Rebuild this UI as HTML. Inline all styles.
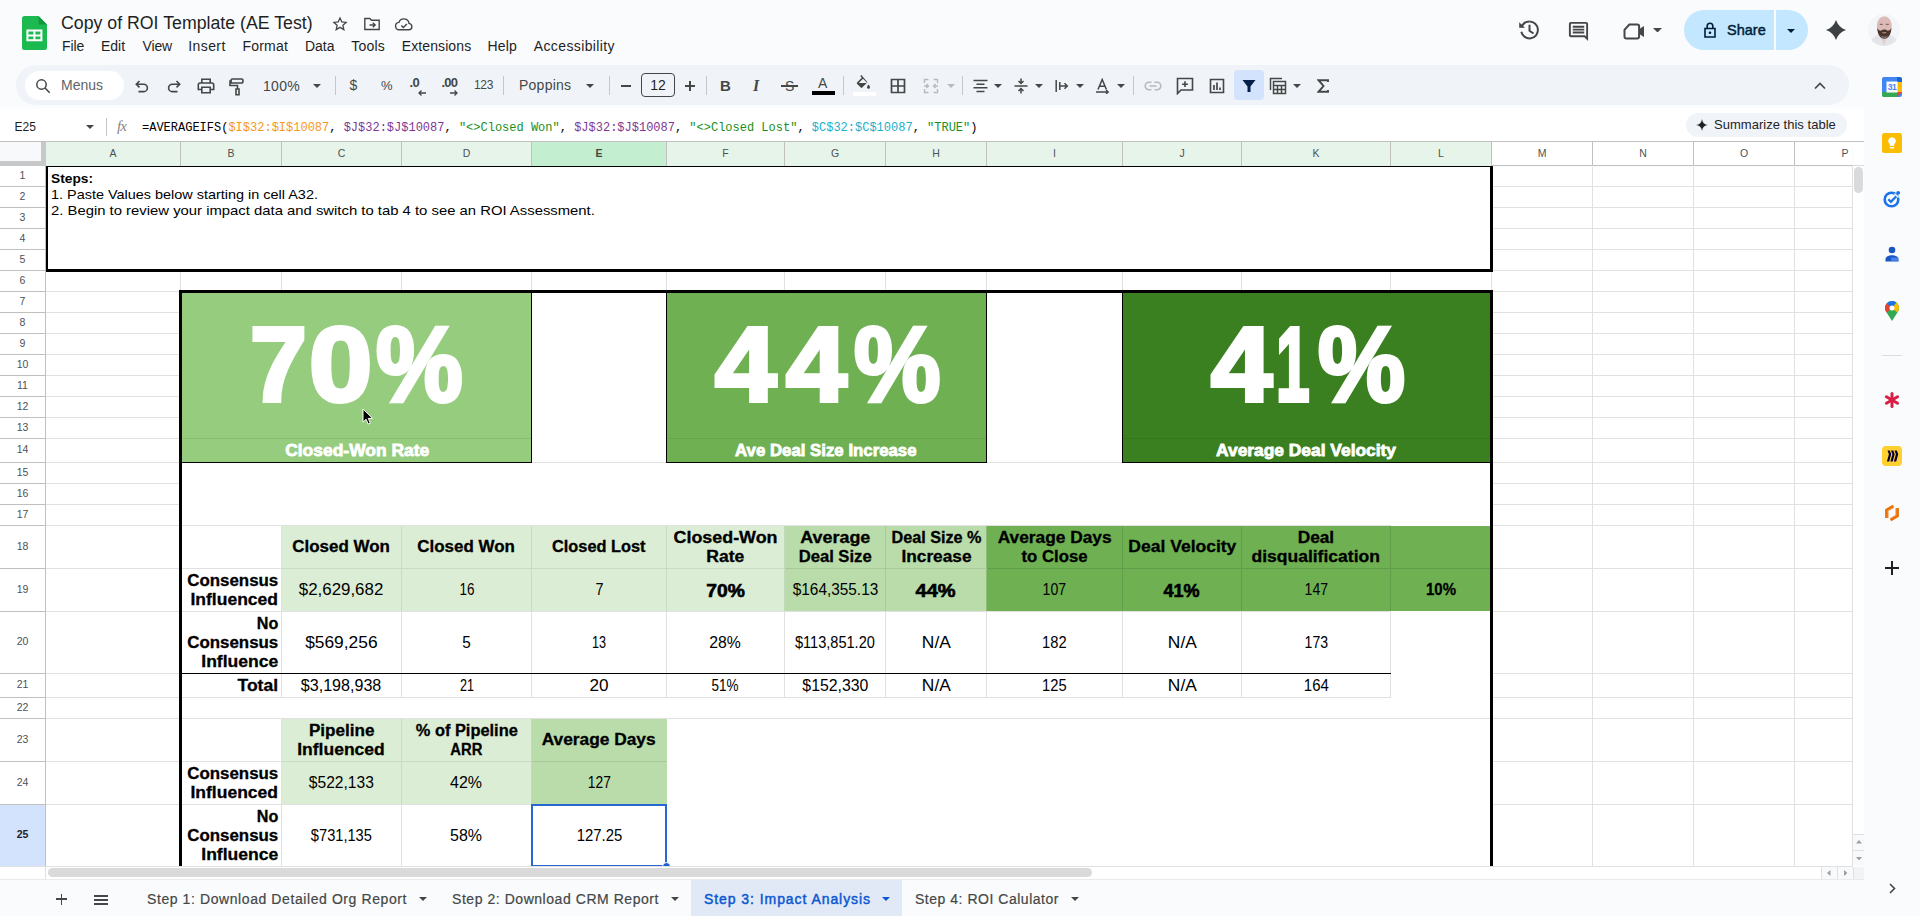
<!DOCTYPE html><html lang="en"><head><meta charset="utf-8"><title>Copy of ROI Template (AE Test) - Google Sheets</title><style>*{box-sizing:border-box;margin:0;padding:0}
html,body{width:1920px;height:916px;overflow:hidden;background:#f9fbfd;font-family:"Liberation Sans",sans-serif;color:#1f1f1f}
.abs{position:absolute}
#grid{position:absolute;left:0;top:0;width:1920px;height:916px}
.hln{position:absolute;left:46px;width:1806px;height:1px;background:#e1e1e1}
.vln{position:absolute;top:167px;width:1px;height:699px;background:#e1e1e1}
.ch{position:absolute;top:142px;height:24px;background:#fff;font-size:10.5px;color:#4d5156;text-align:center;line-height:23px}
.ch.chs{background:#e6f4ea}
.ch.cha{background:#c4eed0;font-weight:bold;color:#3c4a3e}
.rh{position:absolute;left:0;width:45px;background:#fff;font-size:10.5px;color:#4d5156;text-align:center}
.rh.rha{background:#d3e3fd;font-weight:bold;color:#1f1f1f}
.bg{position:absolute}
.c{position:absolute;display:flex;align-items:center;justify-content:center;text-align:center;font-size:16px;line-height:19px;color:#000;white-space:nowrap}
.c span{display:inline-block;transform:scaleX(1.1);transform-origin:center}
.c.b{font-weight:bold;-webkit-text-stroke:0.3px #000}
.c.r{justify-content:flex-end;text-align:right;padding-right:2.5px}
.c.r span{transform-origin:right center}
.blk{position:absolute;background:#000}
.mn{position:absolute;top:38px;font-size:14px;line-height:16px;color:#1f1f1f;white-space:nowrap}
.tb{position:absolute}
.sep{position:absolute;top:76px;width:1px;height:20px;background:#c7c7c7}
.tab{position:absolute;top:881px;height:36px;font-size:14px;line-height:36px;color:#444746;white-space:nowrap}
</style></head><body>
<div id="top">
<div class="abs" style="left:0;top:0;width:1920px;height:142px;background:#f9fbfd"></div>
<svg class="abs" style="left:21.500px;top:16px" width="25" height="34" viewBox="0 0 25 34"><path d="M2.500 0H16.500l8.500 8.500V31.500a2.500 2.500 0 0 1-2.500 2.500h-20A2.500 2.500 0 0 1 0 31.500V2.500A2.500 2.500 0 0 1 2.500 0z" fill="#1cb950"/><path d="M16.500 0l8.500 8.500h-8.500z" fill="#12983e"/><path d="M4.400 13.600h16v11.700h-16zM6.400 15.600v2.800h5v-2.800zM13.400 15.600v2.800h5v-2.800zM6.400 20.400v2.900h5v-2.900zM13.400 20.400v2.900h5v-2.900z" fill="#fff" fill-rule="evenodd"/></svg>
<div class="abs" id="title" style="left:61px;top:11px;font-size:18px;line-height:24px;color:#1f1f1f;white-space:nowrap;transform:scaleX(0.985);transform-origin:left center">Copy of ROI Template (AE Test)</div>
<svg class="abs" style="left:331px;top:14.5px" width="18" height="18" viewBox="0 0 18 18"><path d="M9 2.200l2.060 4.500 4.900.500-3.680 3.280 1.050 4.820L9 12.800l-4.330 2.500 1.050-4.820L2.040 7.200l4.900-.500z" fill="none" stroke="#444746" stroke-width="1.5" transform="translate(1.100,1.100) scale(0.880)"/></svg>
<svg class="abs" style="left:363px;top:15.5px" width="18" height="16" viewBox="0 0 18 16"><path d="M1.800 2.500h5l1.700 1.800h7.700v9.200H1.800z" fill="none" stroke="#444746" stroke-width="1.4" /><path d="M6.500 9h5.500M9.800 6.700L12.200 9l-2.400 2.300" fill="none" stroke="#444746" stroke-width="1.4" /></svg>
<svg class="abs" style="left:394px;top:16.5px" width="20" height="14" viewBox="0 0 20 14"><path d="M5.200 12.800a3.700 3.700 0 0 1-.300-7.380A5.200 5.200 0 0 1 15 6.400a3.250 3.250 0 0 1 .300 6.400z" fill="none" stroke="#444746" stroke-width="1.4" /><path d="M7.300 8.600l2 2 3.600-3.600" fill="none" stroke="#444746" stroke-width="1.4" /></svg>
<div class="mn" style="left:62px;letter-spacing:-0.077px">File</div>
<div class="mn" style="left:101px;letter-spacing:-0.031px">Edit</div>
<div class="mn" style="left:142.5px;letter-spacing:-0.148px">View</div>
<div class="mn" style="left:188.25px;letter-spacing:0.415px">Insert</div>
<div class="mn" style="left:242.5px;letter-spacing:0.194px">Format</div>
<div class="mn" style="left:305px;letter-spacing:-0.018px">Data</div>
<div class="mn" style="left:351.25px;letter-spacing:0.213px">Tools</div>
<div class="mn" style="left:401.75px;letter-spacing:0.102px">Extensions</div>
<div class="mn" style="left:487.5px;letter-spacing:0.177px">Help</div>
<div class="mn" style="left:533.75px;letter-spacing:0.385px">Accessibility</div>
<div class="abs" style="left:16px;top:65px;width:1833px;height:40px;border-radius:20px;background:#f0f4f9"></div>
<div class="abs" style="left:25px;top:71px;width:99px;height:29px;border-radius:15px;background:#fff"></div>
<svg class="abs" style="left:34.5px;top:77.5px" width="16" height="16" viewBox="0 0 16 16"><circle cx="6.500" cy="6.500" r="4.700" fill="none" stroke="#444746" stroke-width="1.500"/><path d="M10 10l4.700 4.700" fill="none" stroke="#444746" stroke-width="1.6" /></svg>
<div class="abs" style="left:61px;top:77px;font-size:14px;line-height:17px;color:#5f6368;white-space:nowrap;">Menus</div>
<svg class="abs" style="left:135px;top:80px" width="14" height="13" viewBox="0 0 14 13"><path d="M4.500 1L1.300 4.200l3.200 3.200M1.500 4.200h7.200a3.700 3.700 0 0 1 0 7.400H3.500" fill="none" stroke="#444746" stroke-width="1.6" /></svg>
<svg class="abs" style="left:167px;top:80px" width="14" height="13" viewBox="0 0 14 13"><path d="M9.500 1l3.200 3.200-3.200 3.200M12.500 4.200H5.300a3.700 3.700 0 0 0 0 7.400h5.200" fill="none" stroke="#444746" stroke-width="1.6" /></svg>
<svg class="abs" style="left:197px;top:78px" width="18" height="16" viewBox="0 0 18 16"><path d="M4.800 5V1.300h8.400V5M4.800 11.500H1.300V6.800a1.800 1.800 0 0 1 1.800-1.800h11.800a1.800 1.800 0 0 1 1.800 1.800v4.700h-3.500M4.800 9.200h8.400v5.500H4.800z" fill="none" stroke="#444746" stroke-width="1.6" /></svg>
<svg class="abs" style="left:229px;top:77.5px" width="16" height="18" viewBox="0 0 16 18"><path d="M3.300 1h9.400a1.200 1.200 0 0 1 1.200 1.200v1.600a1.200 1.200 0 0 1-1.200 1.200H3.300a1.200 1.200 0 0 1-1.200-1.200V2.200A1.200 1.200 0 0 1 3.300 1zM2 3H1v4.500h7.500v3.500M7 11h3v5.800H7z" fill="none" stroke="#444746" stroke-width="1.6" /></svg>
<div class="abs" style="left:263px;top:77px;font-size:14px;line-height:18px;color:#444746;white-space:nowrap;letter-spacing:0.300px">100%</div>
<svg class="abs" style="left:313px;top:84px" width="8" height="4" viewBox="0 0 8 4"><path d="M0 0h8l-4 4z" fill="#444746"/></svg>
<div class="abs" style="left:335px;top:76px;width:1px;height:19px;background:#c7c7c7"></div>
<div class="abs" style="left:349.5px;top:77px;font-size:14px;line-height:17px;color:#444746;white-space:nowrap;">$</div>
<div class="abs" style="left:381px;top:77px;font-size:13px;line-height:17px;color:#444746;white-space:nowrap;">%</div>
<div class="abs" style="left:409.5px;top:75px;font-size:13px;line-height:16px;color:#444746;white-space:nowrap;font-weight:bold;letter-spacing:-0.500px">.0</div>
<svg class="abs" style="left:418px;top:90px" width="8" height="6" viewBox="0 0 8 6"><path d="M8 3H1M3.500 0.500L1 3l2.500 2.500" fill="none" stroke="#444746" stroke-width="1.3" /></svg>
<div class="abs" style="left:441.5px;top:75px;font-size:13px;line-height:16px;color:#444746;white-space:nowrap;font-weight:bold;letter-spacing:-0.800px">.00</div>
<svg class="abs" style="left:450px;top:90px" width="8" height="6" viewBox="0 0 8 6"><path d="M0 3h7M4.500 0.500L7 3 4.500 5.500" fill="none" stroke="#444746" stroke-width="1.3" /></svg>
<div class="abs" style="left:474px;top:78px;font-size:12px;line-height:15px;color:#444746;white-space:nowrap;letter-spacing:-0.300px">123</div>
<div class="abs" style="left:503px;top:76px;width:1px;height:19px;background:#c7c7c7"></div>
<div class="abs" style="left:519px;top:76px;font-size:14px;line-height:18px;color:#444746;white-space:nowrap;letter-spacing:0.250px">Poppins</div>
<svg class="abs" style="left:586px;top:84px" width="8" height="4" viewBox="0 0 8 4"><path d="M0 0h8l-4 4z" fill="#444746"/></svg>
<div class="abs" style="left:609px;top:76px;width:1px;height:19px;background:#c7c7c7"></div>
<div class="abs" style="left:621px;top:85px;width:10px;height:1.600px;background:#444746"></div>
<div class="abs" style="left:641px;top:73px;width:34px;height:24px;border:1px solid #444746;border-radius:4px;font-size:14px;line-height:23px;text-align:center;color:#1f1f1f">12</div>
<div class="abs" style="left:685px;top:85px;width:10px;height:1.600px;background:#444746"></div><div class="abs" style="left:689.200px;top:81px;width:1.600px;height:10px;background:#444746"></div>
<div class="abs" style="left:706px;top:76px;width:1px;height:19px;background:#c7c7c7"></div>
<div class="abs" style="left:720px;top:77px;font-size:15px;line-height:18px;color:#444746;white-space:nowrap;font-weight:bold">B</div>
<div class="abs" style="left:753px;top:77px;font-size:15px;line-height:18px;color:#444746;white-space:nowrap;font-style:italic;font-weight:bold;font-family:'Liberation Serif',serif;font-size:16px">I</div>
<div class="abs" style="left:785px;top:77px;font-size:14px;line-height:18px;color:#444746;white-space:nowrap;">S</div>
<div class="abs" style="left:781px;top:85px;width:17px;height:1.500px;background:#444746"></div>
<div class="abs" style="left:818px;top:74px;font-size:14px;line-height:18px;color:#444746;white-space:nowrap;">A</div>
<div class="abs" style="left:812px;top:91px;width:23px;height:4px;background:#000"></div>
<div class="abs" style="left:843px;top:76px;width:1px;height:19px;background:#c7c7c7"></div>
<svg class="abs" style="left:854px;top:74px" width="18" height="16" viewBox="0 0 18 16"><path d="M8.200 1L6.900 2.300l1.800 1.800L3.500 9.300a1.200 1.200 0 0 0 0 1.700l4 4a1.200 1.200 0 0 0 1.700 0l5.800-5.800zM5.300 10.100l4.700-4.700 4.700 4.700z" fill="#444746" transform="scale(0.900)"/><path d="M14.500 10.500s-1.500 1.700-1.500 2.700a1.500 1.500 0 0 0 3 0c0-1-1.500-2.700-1.500-2.700z" fill="#444746"/></svg>
<div class="abs" style="left:853px;top:92px;width:23px;height:4px;background:#fff"></div>
<svg class="abs" style="left:890px;top:78px" width="16" height="16" viewBox="0 0 16 16"><path d="M1.500 1.500h13v13h-13zM8 1.500v13M1.500 8h13" fill="none" stroke="#444746" stroke-width="1.7" /></svg>
<svg class="abs" style="left:923px;top:78px" width="16" height="16" viewBox="0 0 16 16"><path d="M1.500 5V1.500h4M10.500 1.500h4V5M14.500 11v3.500h-4M5.500 14.500h-4V11M1 8h4.500M3.500 6l2 2-2 2M15 8h-4.500M12.500 6l-2 2 2 2" fill="none" stroke="#b7babd" stroke-width="1.4" /></svg>
<svg class="abs" style="left:947px;top:84px" width="8" height="4" viewBox="0 0 8 4"><path d="M0 0h8l-4 4z" fill="#b7babd"/></svg>
<div class="abs" style="left:962px;top:76px;width:1px;height:19px;background:#c7c7c7"></div>
<svg class="abs" style="left:972.5px;top:79px" width="15" height="14" viewBox="0 0 15 14"><path d="M0.500 1.500h14M3.500 5.200h8M0.500 8.800h14M3.500 12.500h8" fill="none" stroke="#444746" stroke-width="1.6" /></svg>
<svg class="abs" style="left:994px;top:84px" width="8" height="4" viewBox="0 0 8 4"><path d="M0 0h8l-4 4z" fill="#444746"/></svg>
<svg class="abs" style="left:1014px;top:78px" width="14" height="16" viewBox="0 0 14 16"><path d="M0.500 8h13M7 0.500v4.500M4.500 3L7 5.500 9.500 3M7 15.500V11M4.500 13L7 10.500 9.500 13" fill="none" stroke="#444746" stroke-width="1.5" /></svg>
<svg class="abs" style="left:1035px;top:84px" width="8" height="4" viewBox="0 0 8 4"><path d="M0 0h8l-4 4z" fill="#444746"/></svg>
<svg class="abs" style="left:1055px;top:79px" width="14" height="14" viewBox="0 0 14 14"><path d="M1.200 1v12M4.500 7h7.500M9.500 4.300L12.300 7 9.500 9.700M4.800 3v8" fill="none" stroke="#444746" stroke-width="1.5" /></svg>
<svg class="abs" style="left:1076px;top:84px" width="8" height="4" viewBox="0 0 8 4"><path d="M0 0h8l-4 4z" fill="#444746"/></svg>
<svg class="abs" style="left:1095px;top:78px" width="16" height="16" viewBox="0 0 16 16"><path d="M3 11.500L7.200 1.500 11.400 11.500M4.500 8.200h5.400" fill="none" stroke="#444746" stroke-width="1.5" /><path d="M1 14h12M11 12l2.300 2-2.300 2" fill="none" stroke="#444746" stroke-width="1.3" /></svg>
<svg class="abs" style="left:1117px;top:84px" width="8" height="4" viewBox="0 0 8 4"><path d="M0 0h8l-4 4z" fill="#444746"/></svg>
<div class="abs" style="left:1133px;top:76px;width:1px;height:19px;background:#c7c7c7"></div>
<svg class="abs" style="left:1144px;top:81px" width="18" height="10" viewBox="0 0 18 10"><path d="M7.500 1.200H5a3.800 3.800 0 0 0 0 7.600h2.500M10.500 1.200H13a3.800 3.800 0 0 1 0 7.600h-2.500M5.500 5h7" fill="none" stroke="#b7babd" stroke-width="1.6" /></svg>
<svg class="abs" style="left:1176px;top:77px" width="18" height="18" viewBox="0 0 18 18"><path d="M1.500 1.500h15v11.500H5l-3.500 3.500zM9 4.300v5.800M6.100 7.200h5.800" fill="none" stroke="#444746" stroke-width="1.6" /></svg>
<svg class="abs" style="left:1209px;top:78px" width="16" height="16" viewBox="0 0 16 16"><path d="M1.500 1.500h13v13h-13z" fill="none" stroke="#444746" stroke-width="1.6" /><path d="M5 12V7M8 12V4.500M11 12v-2.500" fill="none" stroke="#444746" stroke-width="1.7" /></svg>
<div class="abs" style="left:1234px;top:70px;width:30px;height:30px;border-radius:4px;background:#d3e3fd"></div>
<svg class="abs" style="left:1242px;top:79px" width="14" height="14" viewBox="0 0 14 14"><path d="M0.500 1h13L8.500 7.500V13h-3V7.500z" fill="#041e49" /></svg>
<svg class="abs" style="left:1269px;top:77px" width="18" height="18" viewBox="0 0 18 18"><path d="M4.500 4.500h12v12h-12zM4.500 8.500h12M4.500 12.500h12M8.500 8.500v8M12.500 8.500v8" fill="none" stroke="#444746" stroke-width="1.5" /><path d="M1.500 13V1.500H13" fill="none" stroke="#444746" stroke-width="1.5" /></svg>
<svg class="abs" style="left:1293px;top:84px" width="8" height="4" viewBox="0 0 8 4"><path d="M0 0h8l-4 4z" fill="#444746"/></svg>
<svg class="abs" style="left:1317px;top:79px" width="12" height="14" viewBox="0 0 12 14"><path d="M11 3V1.200H1.500L6.500 7l-5 5.800H11V11" fill="none" stroke="#444746" stroke-width="1.9" /></svg>
<svg class="abs" style="left:1814px;top:82px" width="12" height="8" viewBox="0 0 12 8"><path d="M1 6.500l5-5 5 5" fill="none" stroke="#444746" stroke-width="1.7" /></svg>
<div class="abs" style="left:0;top:111px;width:1864px;height:30px;background:#fff"></div>
<div class="abs" style="left:0;top:105px;width:1864px;height:6px;background:linear-gradient(#f9fbfd,#fff)"></div>
<div class="abs" style="left:14.5px;top:119px;font-size:12px;line-height:16px;color:#1f1f1f;white-space:nowrap;">E25</div>
<svg class="abs" style="left:85.5px;top:125px" width="8" height="4" viewBox="0 0 8 4"><path d="M0 0h8l-4 4z" fill="#444746"/></svg>
<div class="abs" style="left:106px;top:118px;width:1px;height:18px;background:#c7c7c7"></div>
<div class="abs" style="left:117px;top:117px;font-family:'Liberation Serif',serif;font-style:italic;font-size:15px;line-height:18px;color:#80868b;letter-spacing:-1px">fx</div>
<div class="abs" id="fx" style="left:142px;top:120px;font-family:'Liberation Mono',monospace;font-size:12px;line-height:16px;color:#000;white-space:pre">=AVERAGEIFS(<span style="color:#f7981d">$I$32:$I$10087</span>, <span style="color:#7e3794">$J$32:$J$10087</span>, <span style="color:#1a8f1a">"&lt;&gt;Closed Won"</span>, <span style="color:#7e3794">$J$32:$J$10087</span>, <span style="color:#1a8f1a">"&lt;&gt;Closed Lost"</span>, <span style="color:#22b0c9">$C$32:$C$10087</span>, <span style="color:#1a8f1a">"TRUE"</span>)</div>
<div class="abs" style="left:1686px;top:113px;width:161px;height:24px;border-radius:12px;background:#f0f4f9"></div>
<svg class="abs" style="left:1696px;top:119px" width="12" height="12" viewBox="0 0 12 12"><path d="M6 0C6.400 3.600 8.400 5.600 12 6 8.400 6.400 6.400 8.400 6 12 5.600 8.400 3.600 6.400 0 6 3.600 5.600 5.600 3.600 6 0z" fill="#1f1f1f" /></svg>
<div class="abs" style="left:1714px;top:117px;font-size:13px;line-height:16px;color:#1f1f1f;white-space:nowrap;letter-spacing:0.021px">Summarize this table</div>
<svg class="abs" style="left:1518px;top:19px" width="22" height="22" viewBox="0 0 22 22"><path d="M11.500 2.600a8.400 8.400 0 1 1-8.200 10.200" fill="none" stroke="#444746" stroke-width="2"/><path d="M3.500 8.400a8.400 8.400 0 0 1 8-5.800" fill="none" stroke="#444746" stroke-width="2" /><path d="M1.200 3.200l5.800 5.600H1.200z" fill="#444746" /><path d="M11.500 5.800v5.900l4 2.800" fill="none" stroke="#444746" stroke-width="2" /></svg>
<svg class="abs" style="left:1566.500px;top:19.500px" width="23" height="23" viewBox="0 0 24 24"><path d="M21.990 4c0-1.100-.890-2-1.990-2H4c-1.100 0-2 .900-2 2v12c0 1.100.900 2 2 2h14l4 4-.010-18zM20 4v13.170L18.830 16H4V4h16zM6 12h12v2H6zm0-3h12v2H6zm0-3h12v2H6z" fill="#444746"/></svg>
<svg class="abs" style="left:1622.5px;top:22.5px" width="22" height="17" viewBox="0 0 22 17"><path d="M6.300 1.500h8a1.800 1.800 0 0 1 1.800 1.800v10.400a1.800 1.800 0 0 1-1.800 1.800H3.300a1.800 1.800 0 0 1-1.800-1.800V6.800z" fill="none" stroke="#444746" stroke-width="2" /><path d="M16 6.300l5-3.300v11l-5-3.300z" fill="#444746" /></svg>
<svg class="abs" style="left:1652.5px;top:27.75px" width="9" height="4.5" viewBox="0 0 9 4.5"><path d="M0 0h9l-4.5 4.5z" fill="#444746"/></svg>
<div class="abs" style="left:1684px;top:10px;width:124px;height:40px;border-radius:20px;background:#c2e7ff"></div>
<div class="abs" style="left:1774px;top:10px;width:1.500px;height:40px;background:#f9fbfd"></div>
<svg class="abs" style="left:1704px;top:21.5px" width="12" height="16" viewBox="0 0 12 16"><path d="M1 6.500h10v8.500H1zM3.200 6.500V4a2.800 2.800 0 0 1 5.600 0v2.500" fill="none" stroke="#001d35" stroke-width="1.6" /><circle cx="6" cy="10.700" r="1.300" fill="#001d35"/></svg>
<div class="abs" style="left:1727px;top:21px;font-size:14.5px;line-height:18px;color:#001d35;white-space:nowrap;-webkit-text-stroke:0.450px #001d35">Share</div>
<svg class="abs" style="left:1787px;top:28.5px" width="8" height="4" viewBox="0 0 8 4"><path d="M0 0h8l-4 4z" fill="#001d35"/></svg>
<svg class="abs" style="left:1826px;top:20px" width="20" height="20" viewBox="0 0 20 20"><path d="M10 0C11.800 5 15 8.200 20 10 15 11.800 11.800 15 10 20 8.200 15 5 11.800 0 10 5 8.200 8.200 5 10 0z" fill="#3c4043" /></svg>
<svg class="abs" style="left:1868px;top:14px" width="32" height="32" viewBox="0 0 32 32"><defs><clipPath id="av"><circle cx="16" cy="16" r="16"/></clipPath></defs><g clip-path="url(#av)"><rect width="32" height="32" fill="#f4f5f8"/><path d="M2 32c0-7 5-10.500 9-11.500l5 2 5-2c4 1 9 4.500 9 11.500z" fill="#e3e5ea"/><path d="M12 21l4 11 4.500-11z" fill="#e6cfcd"/><ellipse cx="16.300" cy="11.500" rx="7.400" ry="9.300" fill="#dcbab5"/><path d="M9.200 13.500c0 6.500 3 11.300 7.100 11.300s7.100-4.800 7.100-11.300c-.8 2.300-2.300 3.200-3.600 3.200-1.200-.9-2.300-1.200-3.500-1.200s-2.300.3-3.500 1.200c-1.300 0-2.800-.9-3.600-3.200z" fill="#4a342e"/><path d="M12.500 21.500c1 2.200 2.300 3.300 3.800 3.300s2.800-1.100 3.800-3.300c-1.200.7-2.400 1-3.800 1s-2.600-.3-3.800-1z" fill="#7a6f6c"/><path d="M14.300 18.300h4v1h-4z" fill="#c79a92"/><path d="M11.800 10.300h3M17.800 10.300h3" stroke="#6b4a43" stroke-width="0.900"/></g></svg>
</div>
<div id="grid">
<div class="abs" style="left:46px;top:167px;width:1806px;height:699px;background:#fff"></div>
<div class="hln" style="top:186px"></div>
<div class="hln" style="top:207px"></div>
<div class="hln" style="top:228px"></div>
<div class="hln" style="top:249px"></div>
<div class="hln" style="top:270px"></div>
<div class="hln" style="top:291px"></div>
<div class="hln" style="top:312px"></div>
<div class="hln" style="top:333px"></div>
<div class="hln" style="top:354px"></div>
<div class="hln" style="top:375px"></div>
<div class="hln" style="top:396px"></div>
<div class="hln" style="top:417px"></div>
<div class="hln" style="top:438px"></div>
<div class="hln" style="top:462px"></div>
<div class="hln" style="top:483px"></div>
<div class="hln" style="top:504px"></div>
<div class="hln" style="top:525px"></div>
<div class="hln" style="top:568px"></div>
<div class="hln" style="top:611px"></div>
<div class="hln" style="top:673px"></div>
<div class="hln" style="top:697px"></div>
<div class="hln" style="top:718px"></div>
<div class="hln" style="top:761px"></div>
<div class="hln" style="top:804px"></div>
<div class="hln" style="top:866px"></div>
<div class="vln" style="left:180px"></div>
<div class="vln" style="left:281px"></div>
<div class="vln" style="left:401px"></div>
<div class="vln" style="left:531px"></div>
<div class="vln" style="left:666px"></div>
<div class="vln" style="left:784px"></div>
<div class="vln" style="left:885px"></div>
<div class="vln" style="left:986px"></div>
<div class="vln" style="left:1122px"></div>
<div class="vln" style="left:1241px"></div>
<div class="vln" style="left:1390px"></div>
<div class="vln" style="left:1491px"></div>
<div class="vln" style="left:1592px"></div>
<div class="vln" style="left:1693px"></div>
<div class="vln" style="left:1794px"></div>
<div class="bg" style="left:181px;top:293px;width:1310px;height:573px;background:#fff"></div>
<div class="bg" style="left:46px;top:167px;width:1445px;height:103px;background:#fff"></div>
<div class="bg" style="left:181px;top:525px;width:1210px;height:1px;background:#e1e1e1"></div>
<div class="bg" style="left:181px;top:568px;width:1210px;height:1px;background:#e1e1e1"></div>
<div class="bg" style="left:181px;top:611px;width:1210px;height:1px;background:#e1e1e1"></div>
<div class="bg" style="left:181px;top:697px;width:1210px;height:1px;background:#e1e1e1"></div>
<div class="bg" style="left:181px;top:718px;width:1310px;height:1px;background:#e1e1e1"></div>
<div class="bg" style="left:181px;top:761px;width:486px;height:1px;background:#e1e1e1"></div>
<div class="bg" style="left:181px;top:804px;width:486px;height:1px;background:#e1e1e1"></div>
<div class="bg" style="left:281px;top:526px;width:1px;height:171px;background:#e1e1e1"></div>
<div class="bg" style="left:401px;top:526px;width:1px;height:171px;background:#e1e1e1"></div>
<div class="bg" style="left:531px;top:526px;width:1px;height:171px;background:#e1e1e1"></div>
<div class="bg" style="left:666px;top:526px;width:1px;height:171px;background:#e1e1e1"></div>
<div class="bg" style="left:784px;top:526px;width:1px;height:171px;background:#e1e1e1"></div>
<div class="bg" style="left:885px;top:526px;width:1px;height:171px;background:#e1e1e1"></div>
<div class="bg" style="left:986px;top:526px;width:1px;height:171px;background:#e1e1e1"></div>
<div class="bg" style="left:1122px;top:526px;width:1px;height:171px;background:#e1e1e1"></div>
<div class="bg" style="left:1241px;top:526px;width:1px;height:171px;background:#e1e1e1"></div>
<div class="bg" style="left:1390px;top:526px;width:1px;height:171px;background:#e1e1e1"></div>
<div class="bg" style="left:281px;top:719px;width:1px;height:147px;background:#e1e1e1"></div>
<div class="bg" style="left:401px;top:719px;width:1px;height:147px;background:#e1e1e1"></div>
<div class="bg" style="left:531px;top:719px;width:1px;height:147px;background:#e1e1e1"></div>
<div class="bg" style="left:666px;top:719px;width:1px;height:147px;background:#e1e1e1"></div>
<div class="bg" style="left:532px;top:462px;width:134px;height:1px;background:#e1e1e1"></div>
<div class="bg" style="left:987px;top:462px;width:135px;height:1px;background:#e1e1e1"></div>
<div class="bg" style="left:181px;top:293px;width:350px;height:169px;background:#95cc7e"></div>
<div class="bg" style="left:667px;top:293px;width:319px;height:169px;background:#6fb152"></div>
<div class="bg" style="left:1123px;top:293px;width:368px;height:169px;background:#3b8020"></div>
<div class="bg" style="left:181px;top:438px;width:350px;height:1px;background:rgba(0,0,0,0.07)"></div>
<div class="bg" style="left:667px;top:438px;width:319px;height:1px;background:rgba(0,0,0,0.07)"></div>
<div class="bg" style="left:1123px;top:438px;width:368px;height:1px;background:rgba(0,0,0,0.07)"></div>
<div class="bg" style="left:282px;top:526px;width:503px;height:85px;background:#dcedd5"></div>
<div class="bg" style="left:785px;top:526px;width:202px;height:85px;background:#b9dcaa"></div>
<div class="bg" style="left:987px;top:526px;width:504px;height:85px;background:#6fb152"></div>
<div class="bg" style="left:282px;top:719px;width:250px;height:85px;background:#dcedd5"></div>
<div class="bg" style="left:532px;top:719px;width:135px;height:85px;background:#b9dcaa"></div>
<div class="bg" style="left:401px;top:526px;width:1px;height:85px;background:#c9dcc3"></div>
<div class="bg" style="left:531px;top:526px;width:1px;height:85px;background:#c9dcc3"></div>
<div class="bg" style="left:666px;top:526px;width:1px;height:85px;background:#c9dcc3"></div>
<div class="bg" style="left:885px;top:526px;width:1px;height:85px;background:#a9c99c"></div>
<div class="bg" style="left:784px;top:526px;width:1px;height:85px;background:#c3d9bb"></div>
<div class="bg" style="left:986px;top:526px;width:1px;height:85px;background:#8fbd7a"></div>
<div class="bg" style="left:1122px;top:526px;width:1px;height:85px;background:#639d4a"></div>
<div class="bg" style="left:1241px;top:526px;width:1px;height:85px;background:#639d4a"></div>
<div class="bg" style="left:1390px;top:526px;width:1px;height:85px;background:#639d4a"></div>
<div class="bg" style="left:282px;top:568px;width:503px;height:1px;background:#c9dcc3"></div>
<div class="bg" style="left:785px;top:568px;width:202px;height:1px;background:#a9c99c"></div>
<div class="bg" style="left:987px;top:568px;width:504px;height:1px;background:#639d4a"></div>
<div class="bg" style="left:401px;top:719px;width:1px;height:85px;background:#c9dcc3"></div>
<div class="bg" style="left:531px;top:719px;width:1px;height:85px;background:#c3d9bb"></div>
<div class="bg" style="left:282px;top:761px;width:250px;height:1px;background:#c9dcc3"></div>
<div class="bg" style="left:532px;top:761px;width:135px;height:1px;background:#a9c99c"></div>
<div class="bg" style="left:46px;top:166px;width:1447px;height:1px;background:#000"></div>
<div class="bg" style="left:46px;top:166px;width:2px;height:106px;background:#000"></div>
<div class="bg" style="left:46px;top:269px;width:1447px;height:3px;background:#000"></div>
<div class="bg" style="left:1490px;top:166px;width:3px;height:106px;background:#000"></div>
<div class="bg" style="left:179px;top:290px;width:1314px;height:3px;background:#000"></div>
<div class="bg" style="left:179px;top:290px;width:3px;height:576px;background:#000"></div>
<div class="bg" style="left:1490px;top:290px;width:3px;height:576px;background:#000"></div>
<div class="bg" style="left:182px;top:462px;width:350px;height:1px;background:#000"></div>
<div class="bg" style="left:531px;top:293px;width:1px;height:170px;background:#000"></div>
<div class="bg" style="left:666px;top:293px;width:1px;height:170px;background:#000"></div>
<div class="bg" style="left:666px;top:462px;width:321px;height:1px;background:#000"></div>
<div class="bg" style="left:986px;top:293px;width:1px;height:170px;background:#000"></div>
<div class="bg" style="left:1122px;top:293px;width:1px;height:170px;background:#000"></div>
<div class="bg" style="left:1122px;top:462px;width:369px;height:1px;background:#000"></div>
<div class="bg" style="left:182px;top:673px;width:1209px;height:1px;background:#000"></div>
<div class="c b" style="left:282px;top:525px;width:119px;height:42px;"><div><span style="transform:scaleX(1.058)">Closed Won</span></div></div>
<div class="c b" style="left:402px;top:525px;width:129px;height:42px;"><div><span style="transform:scaleX(1.058)">Closed Won</span></div></div>
<div class="c b" style="left:532px;top:525px;width:134px;height:42px;"><div><span style="transform:scaleX(1.021)">Closed Lost</span></div></div>
<div class="c b" style="left:667px;top:526px;width:117px;height:42px;"><div><span style="transform:scaleX(1.118)">Closed-Won</span><br><span style="transform:scaleX(1.096)">Rate</span></div></div>
<div class="c b" style="left:785px;top:526px;width:100px;height:42px;"><div><span style="transform:scaleX(1.119)">Average</span><br><span style="transform:scaleX(1.039)">Deal Size</span></div></div>
<div class="c b" style="left:886px;top:526px;width:100px;height:42px;"><div><span style="transform:scaleX(1.012)">Deal Size %</span><br><span style="transform:scaleX(1.078)">Increase</span></div></div>
<div class="c b" style="left:987px;top:526px;width:135px;height:42px;"><div><span style="transform:scaleX(1.083)">Average Days</span><br><span style="transform:scaleX(1.046)">to Close</span></div></div>
<div class="c b" style="left:1123px;top:525px;width:118px;height:42px;"><div><span style="transform:scaleX(1.094)">Deal Velocity</span></div></div>
<div class="c b" style="left:1242px;top:526px;width:148px;height:42px;"><div><span style="transform:scaleX(1.080)">Deal</span><br><span style="transform:scaleX(1.095)">disqualification</span></div></div>
<div class="c b r" style="left:181px;top:569px;width:100px;height:42px;"><div><span style="transform:scaleX(1.055)">Consensus</span><br><span style="transform:scaleX(1.094)">Influenced</span></div></div>
<div class="c" style="left:282px;top:568px;width:119px;height:42px;"><div><span style="transform:scaleX(1.055)">$2,629,682</span></div></div>
<div class="c" style="left:402px;top:568px;width:129px;height:42px;"><div><span style="transform:scaleX(0.843)">16</span></div></div>
<div class="c" style="left:532px;top:568px;width:134px;height:42px;"><div><span style="transform:scaleX(0.899)">7</span></div></div>
<div class="c b" style="left:667px;top:570px;width:117px;height:42px;font-size:17.5px;-webkit-text-stroke:0.6px #000;"><div><span style="transform:scaleX(1.099)">70%</span></div></div>
<div class="c" style="left:785px;top:568px;width:100px;height:42px;"><div><span style="transform:scaleX(0.961)">$164,355.13</span></div></div>
<div class="c b" style="left:886px;top:570px;width:100px;height:42px;font-size:17.5px;-webkit-text-stroke:0.6px #000;"><div><span style="transform:scaleX(1.142)">44%</span></div></div>
<div class="c" style="left:987px;top:568px;width:135px;height:42px;"><div><span style="transform:scaleX(0.880)">107</span></div></div>
<div class="c b" style="left:1123px;top:570px;width:118px;height:42px;font-size:17.5px;-webkit-text-stroke:0.6px #000;"><div><span style="transform:scaleX(1.028)">41%</span></div></div>
<div class="c" style="left:1242px;top:568px;width:148px;height:42px;"><div><span style="transform:scaleX(0.880)">147</span></div></div>
<div class="c b" style="left:1391px;top:568px;width:100px;height:42px;"><div><span style="transform:scaleX(0.937)">10%</span></div></div>
<div class="c b r" style="left:181px;top:612px;width:100px;height:61px;"><div><span style="transform:scaleX(1.008)">No</span><br><span style="transform:scaleX(1.055)">Consensus</span><br><span style="transform:scaleX(1.096)">Influence</span></div></div>
<div class="c" style="left:282px;top:612px;width:119px;height:61px;"><div><span style="transform:scaleX(1.086)">$569,256</span></div></div>
<div class="c" style="left:402px;top:612px;width:129px;height:61px;"><div><span style="transform:scaleX(0.955)">5</span></div></div>
<div class="c" style="left:532px;top:612px;width:134px;height:61px;"><div><span style="transform:scaleX(0.787)">13</span></div></div>
<div class="c" style="left:667px;top:612px;width:117px;height:61px;"><div><span style="transform:scaleX(0.984)">28%</span></div></div>
<div class="c" style="left:785px;top:612px;width:100px;height:61px;"><div><span style="transform:scaleX(0.911)">$113,851.20</span></div></div>
<div class="c" style="left:886px;top:612px;width:100px;height:61px;"><div><span style="transform:scaleX(1.087)">N/A</span></div></div>
<div class="c" style="left:987px;top:612px;width:135px;height:61px;"><div><span style="transform:scaleX(0.918)">182</span></div></div>
<div class="c" style="left:1123px;top:612px;width:118px;height:61px;"><div><span style="transform:scaleX(1.087)">N/A</span></div></div>
<div class="c" style="left:1242px;top:612px;width:148px;height:61px;"><div><span style="transform:scaleX(0.880)">173</span></div></div>
<div class="c b r" style="left:181px;top:674px;width:100px;height:23px;"><div><span style="transform:scaleX(1.094)">Total</span></div></div>
<div class="c" style="left:282px;top:674px;width:119px;height:23px;"><div><span style="transform:scaleX(1.005)">$3,198,938</span></div></div>
<div class="c" style="left:402px;top:674px;width:129px;height:23px;"><div><span style="transform:scaleX(0.787)">21</span></div></div>
<div class="c" style="left:532px;top:674px;width:134px;height:23px;"><div><span style="transform:scaleX(1.068)">20</span></div></div>
<div class="c" style="left:667px;top:674px;width:117px;height:23px;"><div><span style="transform:scaleX(0.843)">51%</span></div></div>
<div class="c" style="left:785px;top:674px;width:100px;height:23px;"><div><span style="transform:scaleX(0.989)">$152,330</span></div></div>
<div class="c" style="left:886px;top:674px;width:100px;height:23px;"><div><span style="transform:scaleX(1.087)">N/A</span></div></div>
<div class="c" style="left:987px;top:674px;width:135px;height:23px;"><div><span style="transform:scaleX(0.918)">125</span></div></div>
<div class="c" style="left:1123px;top:674px;width:118px;height:23px;"><div><span style="transform:scaleX(1.087)">N/A</span></div></div>
<div class="c" style="left:1242px;top:674px;width:148px;height:23px;"><div><span style="transform:scaleX(0.936)">164</span></div></div>
<div class="c b" style="left:282px;top:719px;width:119px;height:42px;"><div><span style="transform:scaleX(1.068)">Pipeline</span><br><span style="transform:scaleX(1.094)">Influenced</span></div></div>
<div class="c b" style="left:402px;top:719px;width:129px;height:42px;"><div><span style="transform:scaleX(1.024)">% of Pipeline</span><br><span style="transform:scaleX(0.923)">ARR</span></div></div>
<div class="c b" style="left:532px;top:718px;width:134px;height:42px;"><div><span style="transform:scaleX(1.083)">Average Days</span></div></div>
<div class="c b r" style="left:181px;top:762px;width:100px;height:42px;"><div><span style="transform:scaleX(1.055)">Consensus</span><br><span style="transform:scaleX(1.094)">Influenced</span></div></div>
<div class="c" style="left:282px;top:761px;width:119px;height:42px;"><div><span style="transform:scaleX(0.974)">$522,133</span></div></div>
<div class="c" style="left:402px;top:761px;width:129px;height:42px;"><div><span style="transform:scaleX(0.999)">42%</span></div></div>
<div class="c" style="left:532px;top:761px;width:134px;height:42px;"><div><span style="transform:scaleX(0.862)">127</span></div></div>
<div class="c b r" style="left:181px;top:805px;width:100px;height:61px;"><div><span style="transform:scaleX(1.008)">No</span><br><span style="transform:scaleX(1.055)">Consensus</span><br><span style="transform:scaleX(1.096)">Influence</span></div></div>
<div class="c" style="left:282px;top:805px;width:119px;height:61px;"><div><span style="transform:scaleX(0.914)">$731,135</span></div></div>
<div class="c" style="left:402px;top:805px;width:129px;height:61px;"><div><span style="transform:scaleX(0.999)">58%</span></div></div>
<div class="c" style="left:532px;top:805px;width:134px;height:61px;"><div><span style="transform:scaleX(0.930)">127.25</span></div></div>
<div class="abs" style="left:0;top:311.92px;font-size:105px;line-height:105px;font-weight:bold;color:#fff;-webkit-text-stroke:4px #fff;white-space:nowrap"><span style="position:absolute;left:249.87px;top:0;transform:scaleX(0.9737);transform-origin:0 0">7</span><span style="position:absolute;left:308.71px;top:0;transform:scaleX(1.0853);transform-origin:0 0">0</span><span style="position:absolute;left:376.04px;top:0;transform:scaleX(0.9283);transform-origin:0 0">%</span></div>
<div class="abs" style="left:0;top:311.92px;font-size:105px;line-height:105px;font-weight:bold;color:#fff;-webkit-text-stroke:4px #fff;white-space:nowrap"><span style="position:absolute;left:715.02px;top:0;transform:scaleX(1.0515);transform-origin:0 0">4</span><span style="position:absolute;left:786.02px;top:0;transform:scaleX(1.0415);transform-origin:0 0">4</span><span style="position:absolute;left:853.84px;top:0;transform:scaleX(0.9272);transform-origin:0 0">%</span></div>
<div class="abs" style="left:0;top:311.92px;font-size:105px;line-height:105px;font-weight:bold;color:#fff;-webkit-text-stroke:4px #fff;white-space:nowrap"><span style="position:absolute;left:1210.72px;top:0;transform:scaleX(1.0465);transform-origin:0 0">4</span><span style="position:absolute;left:1276.05px;top:0;transform:scaleX(0.5766);transform-origin:0 0">1</span><span style="position:absolute;left:1317.84px;top:0;transform:scaleX(0.9326);transform-origin:0 0">%</span></div>
<div class="c b" style="left:157.5px;top:440px;width:400px;height:22px;font-size:17px;line-height:22px;color:#fff;-webkit-text-stroke:0.8px #fff"><span style="transform:scaleX(1.026)">Closed-Won Rate</span></div>
<div class="c b" style="left:626.25px;top:440px;width:400px;height:22px;font-size:17px;line-height:22px;color:#fff;-webkit-text-stroke:0.8px #fff"><span style="transform:scaleX(0.988)">Ave Deal Size Increase</span></div>
<div class="c b" style="left:1106.5px;top:440px;width:400px;height:22px;font-size:17px;line-height:22px;color:#fff;-webkit-text-stroke:0.8px #fff"><span style="transform:scaleX(1.022)">Average Deal Velocity</span></div>
<div class="abs" style="left:51px;top:171px;font-size:13.33px;line-height:16px;white-space:nowrap;color:#000;font-weight:bold;transform:scaleX(1.031);transform-origin:left center">Steps:</div>
<div class="abs" style="left:51px;top:187px;font-size:13.33px;line-height:16px;white-space:nowrap;color:#000;transform:scaleX(1.083);transform-origin:left center">1. Paste Values below starting in cell A32.</div>
<div class="abs" style="left:51px;top:203px;font-size:13.33px;line-height:16px;white-space:nowrap;color:#000;transform:scaleX(1.114);transform-origin:left center">2. Begin to review your impact data and switch to tab 4 to see an ROI Assessment.</div>
<div class="abs" style="left:0;top:0;width:1852px;height:916px;overflow:hidden;pointer-events:none">
<div class="abs" style="left:0;top:142px;width:1852px;height:23px;background:#fff"></div>
<div class="ch chs" style="left:46px;width:134px"><span>A</span></div>
<div class="abs" style="left:180px;top:142px;width:1px;height:24px;background:#c0c0c0"></div>
<div class="ch chs" style="left:181px;width:100px"><span>B</span></div>
<div class="abs" style="left:281px;top:142px;width:1px;height:24px;background:#c0c0c0"></div>
<div class="ch chs" style="left:282px;width:119px"><span>C</span></div>
<div class="abs" style="left:401px;top:142px;width:1px;height:24px;background:#c0c0c0"></div>
<div class="ch chs" style="left:402px;width:129px"><span>D</span></div>
<div class="abs" style="left:531px;top:142px;width:1px;height:24px;background:#c0c0c0"></div>
<div class="ch cha" style="left:532px;width:134px"><span>E</span></div>
<div class="abs" style="left:666px;top:142px;width:1px;height:24px;background:#c0c0c0"></div>
<div class="ch chs" style="left:667px;width:117px"><span>F</span></div>
<div class="abs" style="left:784px;top:142px;width:1px;height:24px;background:#c0c0c0"></div>
<div class="ch chs" style="left:785px;width:100px"><span>G</span></div>
<div class="abs" style="left:885px;top:142px;width:1px;height:24px;background:#c0c0c0"></div>
<div class="ch chs" style="left:886px;width:100px"><span>H</span></div>
<div class="abs" style="left:986px;top:142px;width:1px;height:24px;background:#c0c0c0"></div>
<div class="ch chs" style="left:987px;width:135px"><span>I</span></div>
<div class="abs" style="left:1122px;top:142px;width:1px;height:24px;background:#c0c0c0"></div>
<div class="ch chs" style="left:1123px;width:118px"><span>J</span></div>
<div class="abs" style="left:1241px;top:142px;width:1px;height:24px;background:#c0c0c0"></div>
<div class="ch chs" style="left:1242px;width:148px"><span>K</span></div>
<div class="abs" style="left:1390px;top:142px;width:1px;height:24px;background:#c0c0c0"></div>
<div class="ch chs" style="left:1391px;width:100px"><span>L</span></div>
<div class="abs" style="left:1491px;top:142px;width:1px;height:24px;background:#c0c0c0"></div>
<div class="ch" style="left:1492px;width:100px"><span>M</span></div>
<div class="abs" style="left:1592px;top:142px;width:1px;height:24px;background:#c0c0c0"></div>
<div class="ch" style="left:1593px;width:100px"><span>N</span></div>
<div class="abs" style="left:1693px;top:142px;width:1px;height:24px;background:#c0c0c0"></div>
<div class="ch" style="left:1694px;width:100px"><span>O</span></div>
<div class="abs" style="left:1794px;top:142px;width:1px;height:24px;background:#c0c0c0"></div>
<div class="ch" style="left:1795px;width:100px"><span>P</span></div>
<div class="abs" style="left:0;top:141px;width:1852px;height:1px;background:#c0c0c0"></div>
<div class="abs" style="left:1492px;top:165px;width:360px;height:1px;background:#c0c0c0"></div>
</div>
<div class="abs" style="left:0;top:166px;width:45px;height:700px;background:#fff"></div>
<div class="rh" style="top:167px;height:19px"></div>
<div class="rh" style="top:166px;height:19px;line-height:19px;background:none">1</div>
<div class="abs" style="left:0;top:186px;width:45px;height:1px;background:#c0c0c0"></div>
<div class="rh" style="top:187px;height:20px"></div>
<div class="rh" style="top:186px;height:20px;line-height:20px;background:none">2</div>
<div class="abs" style="left:0;top:207px;width:45px;height:1px;background:#c0c0c0"></div>
<div class="rh" style="top:208px;height:20px"></div>
<div class="rh" style="top:207px;height:20px;line-height:20px;background:none">3</div>
<div class="abs" style="left:0;top:228px;width:45px;height:1px;background:#c0c0c0"></div>
<div class="rh" style="top:229px;height:20px"></div>
<div class="rh" style="top:228px;height:20px;line-height:20px;background:none">4</div>
<div class="abs" style="left:0;top:249px;width:45px;height:1px;background:#c0c0c0"></div>
<div class="rh" style="top:250px;height:20px"></div>
<div class="rh" style="top:249px;height:20px;line-height:20px;background:none">5</div>
<div class="abs" style="left:0;top:270px;width:45px;height:1px;background:#c0c0c0"></div>
<div class="rh" style="top:271px;height:20px"></div>
<div class="rh" style="top:270px;height:20px;line-height:20px;background:none">6</div>
<div class="abs" style="left:0;top:291px;width:45px;height:1px;background:#c0c0c0"></div>
<div class="rh" style="top:292px;height:20px"></div>
<div class="rh" style="top:291px;height:20px;line-height:20px;background:none">7</div>
<div class="abs" style="left:0;top:312px;width:45px;height:1px;background:#c0c0c0"></div>
<div class="rh" style="top:313px;height:20px"></div>
<div class="rh" style="top:312px;height:20px;line-height:20px;background:none">8</div>
<div class="abs" style="left:0;top:333px;width:45px;height:1px;background:#c0c0c0"></div>
<div class="rh" style="top:334px;height:20px"></div>
<div class="rh" style="top:333px;height:20px;line-height:20px;background:none">9</div>
<div class="abs" style="left:0;top:354px;width:45px;height:1px;background:#c0c0c0"></div>
<div class="rh" style="top:355px;height:20px"></div>
<div class="rh" style="top:354px;height:20px;line-height:20px;background:none">10</div>
<div class="abs" style="left:0;top:375px;width:45px;height:1px;background:#c0c0c0"></div>
<div class="rh" style="top:376px;height:20px"></div>
<div class="rh" style="top:375px;height:20px;line-height:20px;background:none">11</div>
<div class="abs" style="left:0;top:396px;width:45px;height:1px;background:#c0c0c0"></div>
<div class="rh" style="top:397px;height:20px"></div>
<div class="rh" style="top:396px;height:20px;line-height:20px;background:none">12</div>
<div class="abs" style="left:0;top:417px;width:45px;height:1px;background:#c0c0c0"></div>
<div class="rh" style="top:418px;height:20px"></div>
<div class="rh" style="top:417px;height:20px;line-height:20px;background:none">13</div>
<div class="abs" style="left:0;top:438px;width:45px;height:1px;background:#c0c0c0"></div>
<div class="rh" style="top:439px;height:23px"></div>
<div class="rh" style="top:438px;height:23px;line-height:23px;background:none">14</div>
<div class="abs" style="left:0;top:462px;width:45px;height:1px;background:#c0c0c0"></div>
<div class="rh" style="top:463px;height:20px"></div>
<div class="rh" style="top:462px;height:20px;line-height:20px;background:none">15</div>
<div class="abs" style="left:0;top:483px;width:45px;height:1px;background:#c0c0c0"></div>
<div class="rh" style="top:484px;height:20px"></div>
<div class="rh" style="top:483px;height:20px;line-height:20px;background:none">16</div>
<div class="abs" style="left:0;top:504px;width:45px;height:1px;background:#c0c0c0"></div>
<div class="rh" style="top:505px;height:20px"></div>
<div class="rh" style="top:504px;height:20px;line-height:20px;background:none">17</div>
<div class="abs" style="left:0;top:525px;width:45px;height:1px;background:#c0c0c0"></div>
<div class="rh" style="top:526px;height:42px"></div>
<div class="rh" style="top:525px;height:42px;line-height:42px;background:none">18</div>
<div class="abs" style="left:0;top:568px;width:45px;height:1px;background:#c0c0c0"></div>
<div class="rh" style="top:569px;height:42px"></div>
<div class="rh" style="top:568px;height:42px;line-height:42px;background:none">19</div>
<div class="abs" style="left:0;top:611px;width:45px;height:1px;background:#c0c0c0"></div>
<div class="rh" style="top:612px;height:61px"></div>
<div class="rh" style="top:611px;height:61px;line-height:61px;background:none">20</div>
<div class="abs" style="left:0;top:673px;width:45px;height:1px;background:#c0c0c0"></div>
<div class="rh" style="top:674px;height:23px"></div>
<div class="rh" style="top:673px;height:23px;line-height:23px;background:none">21</div>
<div class="abs" style="left:0;top:697px;width:45px;height:1px;background:#c0c0c0"></div>
<div class="rh" style="top:698px;height:20px"></div>
<div class="rh" style="top:697px;height:20px;line-height:20px;background:none">22</div>
<div class="abs" style="left:0;top:718px;width:45px;height:1px;background:#c0c0c0"></div>
<div class="rh" style="top:719px;height:42px"></div>
<div class="rh" style="top:718px;height:42px;line-height:42px;background:none">23</div>
<div class="abs" style="left:0;top:761px;width:45px;height:1px;background:#c0c0c0"></div>
<div class="rh" style="top:762px;height:42px"></div>
<div class="rh" style="top:761px;height:42px;line-height:42px;background:none">24</div>
<div class="abs" style="left:0;top:804px;width:45px;height:1px;background:#c0c0c0"></div>
<div class="rh rha" style="top:805px;height:61px"></div>
<div class="rh rha" style="top:804px;height:61px;line-height:61px;background:none">25</div>
<div class="abs" style="left:0;top:866px;width:45px;height:1px;background:#c0c0c0"></div>
<div class="abs" style="left:45px;top:166px;width:1px;height:700px;background:#c0c0c0"></div>
<div class="abs" style="left:0;top:142px;width:41px;height:19px;background:#f8f9fa"></div>
<div class="abs" style="left:41px;top:142px;width:5px;height:24px;background:#c7c8ca"></div>
<div class="abs" style="left:0;top:161px;width:46px;height:5px;background:#c7c8ca"></div>
<div class="abs" style="left:531px;top:804px;width:136px;height:63px;border:2px solid #2866d0"></div>
<div class="abs" style="left:662px;top:862px;width:9px;height:9px;border-radius:5px;background:#1f5fd0;border:1px solid #fff"></div>
<div class="abs" style="left:1853px;top:142px;width:11px;height:738px;background:#fff"></div>
<div class="abs" style="left:1852px;top:166px;width:1px;height:700px;background:#e1e1e1"></div>
<div class="abs" style="left:1852px;top:141px;width:12px;height:1px;background:#c0c0c0"></div>
<div class="abs" style="left:1852px;top:165px;width:12px;height:1px;background:#dadce0"></div>
<div class="abs" style="left:1854px;top:167px;width:9px;height:26px;border-radius:4.500px;background:#dadada"></div>
<div class="abs" style="left:1853px;top:834px;width:11px;height:32px;background:#f8f9fa"></div>
<div class="abs" style="left:1853px;top:834px;width:11px;height:1px;background:#e1e1e1"></div>
<div class="abs" style="left:1853px;top:850px;width:11px;height:1px;background:#e1e1e1"></div>
<svg class="abs" style="left:1855.5px;top:840.25px" width="6" height="3.5" viewBox="0 0 6 3.5"><path d="M0 3.500L3 0 6 3.500z" fill="#9aa0a6" /></svg>
<svg class="abs" style="left:1855.5px;top:856.75px" width="6" height="3.5" viewBox="0 0 6 3.5"><path d="M0 0L3 3.500 6 0z" fill="#9aa0a6" /></svg>
<div class="abs" style="left:0;top:867px;width:1864px;height:13px;background:#fff"></div>
<div class="abs" style="left:0;top:866px;width:1853px;height:1px;background:#e1e1e1"></div>
<div class="abs" style="left:45px;top:866px;width:1px;height:14px;background:#e1e1e1"></div>
<div class="abs" style="left:48px;top:868px;width:1044px;height:9px;border-radius:4.500px;background:#dadada"></div>
<div class="abs" style="left:1821px;top:867px;width:32px;height:12px;background:#f8f9fa"></div>
<div class="abs" style="left:1853px;top:867px;width:11px;height:12px;background:#f1f3f4"></div>
<div class="abs" style="left:1821px;top:867px;width:1px;height:13px;background:#e1e1e1"></div>
<div class="abs" style="left:1837px;top:867px;width:1px;height:13px;background:#e1e1e1"></div>
<div class="abs" style="left:1853px;top:867px;width:1px;height:13px;background:#e1e1e1"></div>
<svg class="abs" style="left:1827.25px;top:870px" width="3.5" height="6" viewBox="0 0 3.5 6"><path d="M3.500 0L0 3 3.500 6z" fill="#9aa0a6" /></svg>
<svg class="abs" style="left:1843.75px;top:870px" width="3.5" height="6" viewBox="0 0 3.5 6"><path d="M0 0L3.500 3 0 6z" fill="#9aa0a6" /></svg>
<svg class="abs" style="left:362px;top:408px" width="12" height="18" viewBox="0 0 12 18"><path d="M1 1v13.200l3.100-3 2 4.800 2.200-.900-2-4.700h4.300z" fill="#000" stroke="#fff" stroke-width="1"/></svg>
</div>
<div id="bottom">
<div class="abs" style="left:0;top:880px;width:1864px;height:36px;background:#f9fbfd"></div>
<div class="abs" style="left:0;top:879px;width:1864px;height:1px;background:#e8eaed"></div>
<div class="abs" style="left:56px;top:898px;width:11px;height:1.500px;background:#444746"></div><div class="abs" style="left:60.750px;top:893.500px;width:1.500px;height:11px;background:#444746"></div>
<div class="abs" style="left:94px;top:894.5px;width:14px;height:2px;background:#444746"></div>
<div class="abs" style="left:94px;top:898.5px;width:14px;height:2px;background:#444746"></div>
<div class="abs" style="left:94px;top:902.5px;width:14px;height:2px;background:#444746"></div>
<div class="abs" style="left:691px;top:880px;width:211px;height:36px;background:#e1e9f7"></div>
<div class="tab" style="left:147px;color:#444746;-webkit-text-stroke:0.2px #444746;letter-spacing:0.586px">Step 1: Download Detailed Org Report</div>
<svg class="abs" style="left:419px;top:897px" width="8" height="4" viewBox="0 0 8 4"><path d="M0 0h8l-4 4z" fill="#444746"/></svg>
<div class="tab" style="left:452px;color:#444746;-webkit-text-stroke:0.2px #444746;letter-spacing:0.548px">Step 2: Download CRM Report</div>
<svg class="abs" style="left:671px;top:897px" width="8" height="4" viewBox="0 0 8 4"><path d="M0 0h8l-4 4z" fill="#444746"/></svg>
<div class="tab" style="left:704px;color:#0b57d0;-webkit-text-stroke:0.45px #0b57d0;letter-spacing:0.934px">Step 3: Impact Analysis</div>
<svg class="abs" style="left:882px;top:897px" width="8" height="4" viewBox="0 0 8 4"><path d="M0 0h8l-4 4z" fill="#0b57d0"/></svg>
<div class="tab" style="left:915px;color:#444746;-webkit-text-stroke:0.2px #444746;letter-spacing:0.521px">Step 4: ROI Calulator</div>
<svg class="abs" style="left:1071px;top:897px" width="8" height="4" viewBox="0 0 8 4"><path d="M0 0h8l-4 4z" fill="#444746"/></svg>
<div class="abs" style="left:1864px;top:142px;width:56px;height:774px;background:#f9fbfd"></div>
<svg class="abs" style="left:1882px;top:77px" width="20" height="20" viewBox="0 0 20 20"><rect x="0" y="0" width="20" height="20" rx="2.500" fill="#4285f4"/><path d="M15 0h2.500A2.500 2.500 0 0 1 20 2.500V15h-5z" fill="#fbbc04"/><path d="M0 15h15v5H2.500A2.500 2.500 0 0 1 0 17.500z" fill="#34a853"/><path d="M15 15h5l-5 5z" fill="#ea4335"/><path d="M15 0h2.500A2.500 2.500 0 0 1 20 2.500V5h-5z" fill="#1967d2"/><path d="M0 2.500A2.500 2.500 0 0 1 2.500 0H5v5H0z" fill="#4285f4"/><rect x="4.500" y="4.500" width="11" height="11" fill="#fff"/><text x="10" y="13.300" font-family="Liberation Sans,sans-serif" font-size="8.500" font-weight="bold" fill="#4285f4" text-anchor="middle" letter-spacing="-0.500">31</text></svg>
<svg class="abs" style="left:1882px;top:133px" width="20" height="20" viewBox="0 0 20 20"><rect width="20" height="20" rx="2.500" fill="#fbbc04"/><path d="M10 4.200a3.900 3.900 0 0 0-2.200 7.100v1.500h4.400v-1.500A3.900 3.900 0 0 0 10 4.200zM8 14h4v1.400H8z" fill="#fff"/></svg>
<svg class="abs" style="left:1882px;top:189px" width="20" height="20" viewBox="0 0 20 20"><circle cx="9.500" cy="10.500" r="6.800" fill="none" stroke="#1a73e8" stroke-width="2.600"/><path d="M6.300 10.300l2.600 2.600 5.200-5.400" fill="none" stroke="#1a73e8" stroke-width="2.300"/><circle cx="16.200" cy="3.800" r="1.900" fill="#1a73e8"/><path d="M12.500 4.500l4 4" stroke="#f9fbfd" stroke-width="1.400"/></svg>
<svg class="abs" style="left:1882px;top:245px" width="20" height="20" viewBox="0 0 20 20"><circle cx="10" cy="5" r="3.300" fill="#1a56c4"/><path d="M3.500 16.500v-2.200c0-2.400 3-4 6.500-4s6.500 1.600 6.500 4v2.200z" fill="#1a56c4"/><path d="M9 12.500h7.500v4H9z" fill="#6d9af5" opacity="0.600"/></svg>
<svg class="abs" style="left:1885px;top:301px" width="14" height="20" viewBox="0 0 14 20"><path d="M7 0a7 7 0 0 0-7 7c0 1.700.600 3.200 1.600 4.500L7 20l5.400-8.500A7 7 0 0 0 7 0z" fill="#34a853"/><path d="M7 0a7 7 0 0 0-5.400 2.500L7 7l4.500-5.400A7 7 0 0 0 7 0z" fill="#1a73e8"/><path d="M1.600 2.500A7 7 0 0 0 1.600 11.500L7 7z" fill="#ea4335"/><path d="M11.500 1.600L7 7l5.400 4.500A7 7 0 0 0 14 7a7 7 0 0 0-2.500-5.400z" fill="#fbbc04"/><circle cx="7" cy="7" r="2.500" fill="#fff"/></svg>
<div class="abs" style="left:1882px;top:355px;width:20px;height:1px;background:#dadce0"></div>
<svg class="abs" style="left:1884px;top:392px" width="16" height="16" viewBox="-8 -8 16 16"><g stroke="#d81e43" stroke-width="3" stroke-linecap="round"><path d="M0 -6.500V6.500"/><path d="M-5.600 -3.250L5.600 3.250"/><path d="M-5.600 3.250L5.600 -3.250"/></g></svg>
<svg class="abs" style="left:1882px;top:446px" width="20" height="20" viewBox="0 0 20 20"><rect width="20" height="20" rx="4" fill="#ffd02f"/><g fill="#050038"><path d="M5.500 4.500h2.300l1.400 3.800-2 7.200H4.900l2-7.200z"/><path d="M9 4.500h2.300l1.400 3.800-2 7.200H8.400l2-7.200z"/><path d="M12.500 4.500h2.300l1.400 3.800-2 7.200h-2.300l2-7.200z"/></g></svg>
<svg class="abs" style="left:1884px;top:503.500px" width="16" height="18" viewBox="0 0 16 18"><path d="M9.500 2L2.600 6v8" fill="none" stroke="#e8710a" stroke-width="3"/><path d="M6.500 16l6.900-4V4" fill="none" stroke="#e8710a" stroke-width="3"/><path d="M9.500 3.700L4.100 6.800v7" fill="none" stroke="#f6a25b" stroke-width="1"/><path d="M6.500 14.300l5.400-3.100v-7" fill="none" stroke="#f6a25b" stroke-width="1"/></svg>
<div class="abs" style="left:1885px;top:567.250px;width:14px;height:1.500px;background:#1f1f1f"></div><div class="abs" style="left:1891.25px;top:561px;width:1.500px;height:14px;background:#1f1f1f"></div>
<svg class="abs" style="left:1888.5px;top:882.5px" width="7" height="11" viewBox="0 0 7 11"><path d="M1 1l4.500 4.500L1 10" fill="none" stroke="#444746" stroke-width="1.6" /></svg>
</div>
</body></html>
